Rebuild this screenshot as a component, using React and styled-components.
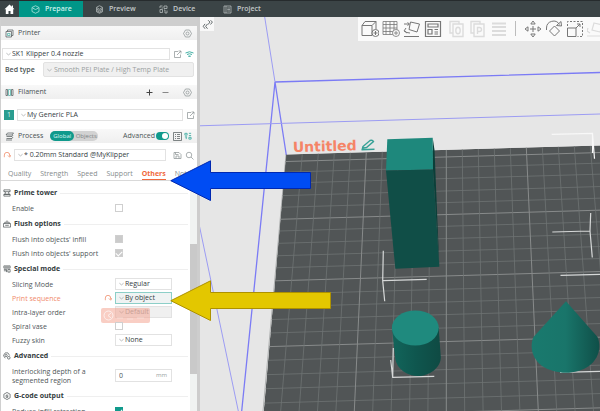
import React from "react";
import styled, { createGlobalStyle } from "styled-components";

const GlobalStyle = createGlobalStyle`
  * {
    box-sizing: border-box;
  }
  body {
    margin: 0;
    overflow: hidden;
    font-family: "Open Sans", "Noto Sans", sans-serif;
    font-size: 7px;
    line-height: 10px;
    color: #4c5456;
    background: #e6e6e6;
  }
  button, input, select {
    font: inherit;
    color: inherit;
    margin: 0;
    padding: 0;
    border: none;
    background: none;
    outline: none;
  }
  svg {
    display: block;
    flex: none;
  }
`;

const Page = styled.div`
  position: relative;
  display: flex;
  flex-direction: column;
  height: 100vh;
  overflow: hidden;
`;

/* top bar */
const TopBar = styled.nav`
  display: flex;
  flex: none;
  height: 17px;
  background: #3b4446;
  border-top: 1px solid #262b2d;
`;
const HomeButton = styled.button`
  display: flex;
  align-items: center;
  justify-content: center;
  width: 19px;
`;
const NavTab = styled.button`
  display: flex;
  align-items: center;
  gap: 5px;
  width: 64px;
  padding-left: 12px;
  font-weight: 600;
  color: ${({ $active }) => ($active ? "#c9f1eb" : "#c3c8c9")};
  background: ${({ $active }) => ($active ? "#009688" : "transparent")};
`;

const Workspace = styled.div`
  display: flex;
  flex: 1;
  min-height: 0;
`;

/* sidebar */
const Sidebar = styled.aside`
  display: flex;
  flex-direction: column;
  flex: 0 0 200px;
  min-height: 0;
  background: #fff;
  border-left: 1px solid #d0d0d0;
  border-right: 3px solid #cdcdcd;
`;
const Strip = styled.div`
  flex: none;
  height: 9px;
  background: #cecece;
`;
const PanelHeader = styled.header`
  display: flex;
  flex: none;
  align-items: center;
  gap: 4px;
  height: 14px;
  padding: 0 5px 0 4px;
  background: linear-gradient(#f8f8f8, #efefef);
`;
const PanelTitle = styled.h2`
  margin: 0;
  font-size: 7px;
  font-weight: 500;
  color: #474f51;
`;
const Spacer = styled.div`
  flex: 1;
`;
const IconButton = styled.button`
  display: flex;
  align-items: center;
  justify-content: center;
  flex: none;
  width: ${({ $wide }) => ($wide ? "14px" : "10px")};
  height: 10px;
  color: ${({ $tone }) => $tone || "#888f91"};
`;
const PanelBody = styled.div`
  display: flex;
  flex: none;
  flex-direction: column;
  gap: 2px;
  padding: ${({ $pad }) => $pad};
`;
const FieldRow = styled.div`
  display: flex;
  align-items: center;
  gap: 2px;
`;
const FieldLabel = styled.label`
  width: 39px;
  padding-left: 3px;
  font-weight: 600;
`;
const Combo = styled.span`
  display: flex;
  flex: 1;
  align-items: center;
  gap: ${({ $tight }) => ($tight ? "1px" : "2px")};
  min-width: 0;
  height: ${({ $tall }) => ($tall ? "15px" : "12px")};
  padding: 0 3px;
  border: 1px solid ${({ $focus }) => ($focus ? "#8ccfc8" : "#e2e2e2")};
  border-radius: ${({ $tall }) => ($tall ? "2px" : "0")};
  background: ${({ $muted, $focus }) =>
    $muted ? "#f0f0f0" : $focus ? "#eff3f3" : "#fff"};
  color: ${({ $muted }) => ($muted ? "#9a9fa0" : "#353d3f")};
  select {
    flex: 1;
    min-width: 0;
    appearance: none;
    line-height: 10px;
    opacity: 1;
  }
`;
const FilamentChip = styled.button`
  width: 10px;
  height: 10px;
  margin: 0 1px 0 1px;
  line-height: 8px;
  color: #d5f2ee;
  background: #2a9d90;
`;
const Scope = styled.div`
  display: flex;
  align-items: center;
  height: 10px;
  margin-left: 3px;
  border-radius: 5px;
  background: #d2d2d2;
`;
const ScopeButton = styled.button`
  height: 10px;
  width: 24px;
  border-radius: 5px;
  font-size: 6px;
  line-height: 9px;
  color: ${({ $active }) => ($active ? "#d8f5f1" : "#7d8385")};
  background: ${({ $active }) => ($active ? "#109a8c" : "transparent")};
`;
const SwitchLabel = styled.label`
  display: flex;
  align-items: center;
  gap: 1px;
`;
const Switch = styled.input`
  appearance: none;
  display: flex;
  justify-content: flex-end;
  width: 13px;
  height: 8px;
  && {
    padding: 1px;
    border-radius: 4px;
    background: #109a8c;
  }
  &::before {
    content: "";
    width: 6px;
    height: 6px;
    border-radius: 3px;
    background: #fff;
  }
`;

const TabList = styled.div`
  display: flex;
  flex: none;
  gap: 9px;
  height: 14px;
  padding-left: 7px;
  overflow: hidden;
  border-bottom: 1px solid #d9d9d9;
`;
const SettingsTab = styled.button`
  flex: none;
  height: 13px;
  white-space: nowrap;
  color: ${({ $active }) => ($active ? "#f0693d" : "#858b8d")};
  font-weight: ${({ $active }) => ($active ? 700 : 400)};
  box-shadow: ${({ $active }) => ($active ? "inset 0 -1px #f0693d" : "none")};
`;

const Settings = styled.div`
  display: flex;
  flex: 1;
  min-height: 0;
`;
const SettingsList = styled.div`
  flex: 1;
  min-width: 0;
  padding: 3px 2px 0 2px;
  overflow: hidden;
`;
const ScrollTrack = styled.div`
  width: 7px;
  padding-top: 63px;
  background: #f0f3f2;
`;
const ScrollThumb = styled.div`
  height: 130px;
  background: #c9c9c9;
`;
const GroupTitle = styled.h3`
  display: flex;
  align-items: center;
  gap: 3px;
  height: 16px;
  margin: 1px 0 0;
  font-size: 7px;
  font-weight: 700;
  color: #343c3e;
  &::after {
    content: "";
    flex: 1;
    height: 1px;
    background: #efefef;
  }
`;
const Option = styled.div`
  position: relative;
  display: grid;
  grid-template-columns: 91px 12px 57px;
  align-items: center;
  min-height: ${({ $double }) => ($double ? "23px" : "14px")};
  padding-left: 9px;
  line-height: 9px;
  label {
    color: ${({ $changed }) => ($changed ? "#f08a6c" : "#4f5759")};
  }
`;
const OptionControl = styled.div`
  display: flex;
  align-items: center;
  grid-column: 3;
`;
const Check = styled.input`
  appearance: none;
  display: flex;
  justify-content: center;
  width: 8px;
  height: 8px;
  && {
    border: 1px solid ${({ $on }) => ($on ? "#109a8c" : "#cfcfcf")};
    background: ${({ $on, disabled }) =>
      $on ? "#109a8c" : disabled ? "#cbcbcb" : "#fff"};
  }
  &:checked::before {
    content: "";
    width: 3px;
    height: 5px;
    border: solid #fff;
    border-width: 0 1px 1px 0;
    transform: rotate(45deg);
  }
`;
const NumberBox = styled.span`
  display: flex;
  flex: 1;
  align-items: center;
  height: 13px;
  padding: 0 4px 0 3px;
  border: 1px solid #e2e2e2;
  input {
    flex: 1;
    width: 0;
  }
`;
const Unit = styled.span`
  font-size: 6px;
  color: #9a9fa1;
`;
const ResetHint = styled.div`
  position: absolute;
  left: 98px;
  top: 3px;
  display: flex;
  align-items: center;
  width: 49px;
  height: 15px;
  padding-left: 2px;
  border-radius: 2px;
  background: rgba(244, 158, 138, 0.5);
`;

/* 3d view */
const Viewport = styled.main`
  position: relative;
  flex: 1;
  min-width: 0;
  background: #e6e6e6;
`;
const Canvas = styled.svg`
  position: absolute;
  inset: 0;
  width: 100%;
  height: 100%;
`;
const ViewTools = styled.div`
  position: relative;
  display: flex;
  justify-content: space-between;
  align-items: flex-start;
`;
const CollapseButton = styled.button`
  display: flex;
  align-items: center;
  justify-content: center;
  width: 14px;
  height: 14px;
  background: #f8f8f8;
`;
const Toolbar = styled.div`
  display: flex;
  flex: 0 0 242px;
  height: 24px;
  padding-left: 1px;
  overflow: hidden;
  background: #fafafa;
`;
const ToolGroup = styled.div`
  display: flex;
  margin-right: 3px;
`;
const Divider = styled.div`
  flex: none;
  width: 1px;
  height: 15px;
  margin: 4px 6px 0 6px;
  background: #bcbcbc;
`;
const Tool = styled.button`
  display: flex;
  align-items: center;
  justify-content: center;
  flex: none;
  width: 21px;
  height: 24px;
  color: ${({ disabled }) => (disabled ? "#dcdcdc" : "#777")};
`;
const Arrow = styled.svg`
  position: absolute;
  left: 170px;
  top: ${({ $top }) => $top};
  pointer-events: none;
`;

const Icon = ({ size = 9, box = 18, w = 1.4, children }) => (
  <svg
    width={size}
    height={size}
    viewBox={`0 0 ${box} ${box}`}
    fill="none"
    stroke="currentColor"
    strokeWidth={w}
    aria-hidden="true"
  >
    {children}
  </svg>
);

const Chevron = () => (
  <svg width="5" height="4" viewBox="0 0 5 4" fill="none" stroke="#a9adae" strokeWidth="0.8">
    <path d="M0.4 1.2 2.5 2.9 4.6 1.2" />
  </svg>
);
const Gear = () => (
  <Icon>
    <path d="M5 2h8l4 7-4 7H5L1 9z" />
    <circle cx="9" cy="9" r="3" />
  </Icon>
);
const Edit = () => (
  <Icon>
    <path d="M10 3H3v12h12V9M8 10l8-8M11 2h5v5" />
  </Icon>
);
const Reset = () => (
  <Icon size={8} w={1.8}>
    <path d="M3 14V9a6 6 0 0 1 12 0v3M11 10l4 4 3-5" />
  </Icon>
);

const Select = ({ id, value, label, ...props }) => (
  <Combo {...props}>
    <Chevron />
    <select id={id} aria-label={label} disabled={props.$muted}>
      <option>{value}</option>
    </select>
  </Combo>
);

const tabs = ["Quality", "Strength", "Speed", "Support", "Others", "Notes"];

const groups = [
  {
    title: "Prime tower",
    icon: <path d="M2 2h14v4H2zM4 6l2 3-3 3h12l-3-3 2-3M2 12h14v4H2z" />,
    options: [{ id: "prime", label: "Enable", type: "check" }],
  },
  {
    title: "Flush options",
    icon: <path d="M1 8h16v8H1zM4 8V5h10v3M9 5V1M5 12h8" />,
    options: [
      { id: "infill", label: "Flush into objects' infill", type: "check", disabled: true },
      { id: "support", label: "Flush into objects' support", type: "check", disabled: true, checked: true },
    ],
  },
  {
    title: "Special mode",
    icon: <path d="M2 2h14v5H2zM2 10h6v6M11 10h5v6h-5zM2 13h6M4 4.5h10" />,
    options: [
      { id: "slicing", label: "Slicing Mode", type: "select", value: "Regular" },
      { id: "sequence", label: "Print sequence", type: "select", value: "By object", changed: true },
      { id: "order", label: "Intra-layer order", type: "select", value: "Default", muted: true, hint: true },
      { id: "spiral", label: "Spiral vase", type: "check" },
      { id: "fuzzy", label: "Fuzzy skin", type: "select", value: "None" },
    ],
  },
  {
    title: "Advanced",
    icon: (
      <>
        <path d="M5 14 1 8l4-6h6l4 6" />
        <circle cx="7" cy="8" r="2.5" />
        <circle cx="13" cy="13" r="3" />
      </>
    ),
    options: [
      { id: "depth", label: "Interlocking depth of a segmented region", type: "number", value: "0" },
    ],
  },
  {
    title: "G-code output",
    icon: (
      <>
        <path d="M9 1l7 4v8l-7 4-7-4V5z" />
        <path d="M12 7H7v5h4V9.5H9" />
      </>
    ),
    options: [
      { id: "retraction", label: "Reduce infill retraction", type: "check", checked: true, on: true },
    ],
  },
];

const OptionRow = ({ option }) => {
  const { id, label, type, value, changed, muted, hint, disabled, checked, on } = option;
  return (
    <Option $changed={changed} $double={type === "number"}>
      <label htmlFor={id}>{label}</label>
      {changed && (
        <IconButton $tone="#f0906f" aria-label="Reset value">
          <Reset />
        </IconButton>
      )}
      <OptionControl>
        {type === "select" && (
          <Select id={id} value={value} $focus={changed} $muted={muted} $tight />
        )}
        {type === "check" && (
          <Check id={id} type="checkbox" disabled={disabled} defaultChecked={checked} $on={on} />
        )}
        {type === "number" && (
          <NumberBox>
            <input id={id} type="text" defaultValue={value} />
            <Unit>mm</Unit>
          </NumberBox>
        )}
      </OptionControl>
      {hint && (
        <ResetHint>
          <svg width="45" height="11" viewBox="0 0 45 11" fill="none" stroke="#fff" opacity="0.7">
            <circle cx="5.5" cy="5.5" r="4.5" />
            <path d="M8 3 5 5.5 8 8" />
            <path d="M14 8h6M24 9h6M34 8h7" opacity="0.5" />
          </svg>
        </ResetHint>
      )}
    </Option>
  );
};

// build plate grid, rows are spaced by perspective
const rows = [
  161.7, 172.3, 183.3, 195.7, 207.3, 219.3, 231, 243.3, 255.7, 267.7, 280.7, 294,
  306.7, 319.3, 332.7, 346.3, 360, 374.3, 388.3, 402.7, 417,
];
const columns = Array.from({ length: 20 }, (_, i) => i - 9);

const Scene = () => (
  <Canvas viewBox="200 17 400 394" preserveAspectRatio="xMinYMin slice" role="img" aria-label="Build plate">
    <defs>
      <clipPath id="plate">
        <path d="M286 154.5 600 145.4 900 137V800H230z" />
      </clipPath>
      <linearGradient id="cone" x1="0" x2="1">
        <stop offset="0" stopColor="#197a6e" />
        <stop offset="0.5" stopColor="#19756a" />
        <stop offset="1" stopColor="#0f4f48" />
      </linearGradient>
      <linearGradient id="tube" x1="0" x2="1">
        <stop offset="0" stopColor="#12655b" />
        <stop offset="0.5" stopColor="#0f564e" />
        <stop offset="1" stopColor="#0f4a43" />
      </linearGradient>
    </defs>
    <g fill="none" stroke="#7b7bf5" strokeWidth="1.3">
      <path d="M275 82 600 72.5M275 82 286.3 155M275 82 241.7 411" />
      <path d="M264.7 17 275 82M199 125.8 600 114M199 224 238.3 411" strokeWidth="1" stroke="#9c9cf3" />
    </g>
    <g clipPath="url(#plate)">
      <path d="M286 154.5 600 145.4 900 137V800H230z" fill="#515556" />
      {rows.map((y, i) => (
        <path
          key={y}
          d={`M262 ${y + 0.5} L700 ${y - 12}`}
          stroke={i % 5 === 0 ? "#888b8b" : "#6f7373"}
          strokeWidth={i % 5 === 0 ? 1 : 0.8}
        />
      ))}
      {columns.map((k) => (
        <path
          key={k}
          d={`M${446.3 + 16 * k} ${149.7 - 0.46 * k} L${446.3 + 18.4 * k} 411`}
          stroke={k % 5 === 0 ? "#888b8b" : "#6f7373"}
          strokeWidth={k % 5 === 0 ? 1 : 0.8}
        />
      ))}
    </g>
    <path d="M286 154.5 263 411" stroke="#8b8e8e" strokeWidth="0.6" />
    <g fill="none" stroke="#d6d8d8" strokeWidth="1.2">
      <path d="M551.7 134.3 592.5 133.3 594.5 158.7M592.5 133.3V153" stroke="#f8f8f8" />
      <path d="M590.7 213 590 231 592.3 257.5M552.3 232 590 231M560.5 275.3 600 274.3" />
      <path d="M383.3 250.7 382.7 280.7 384.7 301.3M382.7 280.7 426.7 279.3" />
      <path d="M393.3 348 392.7 377.3 434.3 376.3M390.7 360 392.7 377.3M560 372.3 600 371.3" />
    </g>
    <path d="M432.7 137.7 434.5 150 439.3 266.7 433 169.3z" fill="#0b3f39" />
    <path d="M387.3 139.3 432.7 137.7 433 169.5 386 170.5z" fill="#1e887c" />
    <path d="M386 170.5 433 169.5 439.3 266.7 395.3 268.7z" fill="#104e47" />
    <path d="M392 328 395.3 359C397 369 407 376 418 376S441 368 440.8 357L438.7 328z" fill="url(#tube)" />
    <ellipse cx="415.3" cy="328" rx="23.4" ry="17.6" fill="#1f8a7e" />
    <path d="M566 301.3 533.5 337C529 348 533 359 542 366 556 375 576 375 589 366 598 359 602 348 597.5 337z" fill="url(#cone)" />
    <text
      x="293"
      y="152"
      transform="rotate(-1.5 293 152)"
      fontFamily="DejaVu Sans"
      fontSize="14"
      fontWeight="700"
      fill="#f58466"
    >
      Untitled
    </text>
    <g fill="none" stroke="#36a196" strokeWidth="1.4">
      <path d="M363 146.5 370 140.5Q372.5 139.5 373.5 141.5L366.5 147.5 362.5 148.3z" />
      <path d="M361.5 149.7 374.5 149.2" />
    </g>
  </Canvas>
);

const App = () => {
  return (
    <Page>
      <GlobalStyle />
      <TopBar>
        <HomeButton aria-label="Home">
          <svg width="11" height="11" viewBox="0 0 11 11" fill="#fff">
            <path d="M5.5 0.5 0.5 5.3H1.8V10H4.5V7H6.5V10H9.2V5.3H10.5L9 3.8V1.5H7.8V2.7z" />
          </svg>
        </HomeButton>
        <NavTab $active>
          <Icon>
            <path d="M9 1.5 16 5v8l-7 3.5L2 13V5zM3 6l6 3 6-3" />
          </Icon>
          Prepare
        </NavTab>
        <NavTab>
          <Icon>
            <path d="M9 1.5 15 4.5v9l-6 3-6-3v-9zM4 5.5l5 3 5-3M4 8.5l5 3 5-3M4 11.5l5 3 5-3" />
          </Icon>
          Preview
        </NavTab>
        <NavTab>
          <Icon>
            <path d="M2 6V2h5M10 2h6v5h-6zM2 9h5v6H2zM10 10h2v6h4v-5M5 6h3" />
          </Icon>
          Device
        </NavTab>
        <NavTab>
          <Icon>
            <path d="M2 2h14v14H2zM6 2v14M8.5 6H14M8.5 9H14M8.5 12H14" />
          </Icon>
          Project
        </NavTab>
      </TopBar>

      <Workspace>
        <Sidebar>
          <Strip />
          <PanelHeader>
            <Icon>
              <path d="M2 5h11v11H2zM5 5V2h11v11h-3" />
              <path d="M5 9h5v4H5z" stroke="#45b0a5" />
            </Icon>
            <PanelTitle>Printer</PanelTitle>
            <Spacer />
            <IconButton aria-label="Printer settings">
              <Gear />
            </IconButton>
          </PanelHeader>
          <PanelBody $pad="8px 3px 8px 1px">
            <FieldRow>
              <Select label="Printer preset" value="SK1 Klipper 0.4 nozzle" $tight />
              <IconButton aria-label="Edit printer">
                <Edit />
              </IconButton>
              <IconButton aria-label="Connection" $tone="#45b0a5">
                <Icon w={2}>
                  <path d="M1 6q8-5 16 0M4 9q5-3 10 0M7 12h4l-2 2z" />
                </Icon>
              </IconButton>
            </FieldRow>
            <FieldRow>
              <FieldLabel htmlFor="bed">Bed type</FieldLabel>
              <Select id="bed" value="Smooth PEI Plate / High Temp Plate" $muted $tall />
            </FieldRow>
          </PanelBody>

          <PanelHeader>
            <Icon>
              <path d="M2 3h3v12H2zM13 3h3v12h-3z" />
              <path d="M7 3h4v12H7z" stroke="#45b0a5" />
            </Icon>
            <PanelTitle>Filament</PanelTitle>
            <Spacer />
            <IconButton aria-label="Add filament" $wide $tone="#444">
              <Icon w={2}>
                <path d="M9 3v12M3 9h12" />
              </Icon>
            </IconButton>
            <IconButton aria-label="Remove filament" $tone="#888">
              <Icon w={2}>
                <path d="M3 9h12" />
              </Icon>
            </IconButton>
            <Spacer style={{ maxWidth: 4 }} />
            <IconButton aria-label="Filament settings">
              <Gear />
            </IconButton>
          </PanelHeader>
          <PanelBody $pad="10px 2px 8px 2px">
            <FieldRow>
              <FilamentChip>1</FilamentChip>
              <Select label="Filament preset" value="My Generic PLA" $tight />
              <IconButton aria-label="Edit filament">
                <Edit />
              </IconButton>
            </FieldRow>
          </PanelBody>

          <PanelHeader>
            <Icon>
              <path d="M5 2h12l-3 4H2zM3 9h11l2-3M3 13h11l2-3M2 16h12" />
            </Icon>
            <PanelTitle>Process</PanelTitle>
            <Scope>
              <ScopeButton $active>Global</ScopeButton>
              <ScopeButton>Objects</ScopeButton>
            </Scope>
            <Spacer />
            <SwitchLabel>
              Advanced
              <Switch type="checkbox" role="switch" defaultChecked />
            </SwitchLabel>
            <FieldRow>
              <Icon>
                <path d="M1 1h16v16H1zM4 5h2M8 5h6M4 9h2M8 9h6M4 13h2M8 13h6" />
              </Icon>
              <Icon size={8} w={2}>
                <path d="M2 3h5v4H2zM11 3h5M11 8h5M2 11h5M5 11v5M11 12h5v4h-5z" stroke="#45b0a5" />
              </Icon>
            </FieldRow>
          </PanelHeader>
          <PanelBody $pad="6px 3px 6px 1px">
            <FieldRow>
              <IconButton aria-label="Reset preset" $tone="#f0906f">
                <Reset />
              </IconButton>
              <Select label="Process preset" value="* 0.20mm Standard @MyKlipper" $tight />
              <Spacer style={{ maxWidth: 2 }} />
              <IconButton aria-label="Save preset">
                <Icon>
                  <path d="M2 3h10l4 4v8H2zM5 3v4h6M6 15v-5h6v5" />
                </Icon>
              </IconButton>
              <IconButton aria-label="Search">
                <Icon>
                  <circle cx="8" cy="8" r="5.5" />
                  <path d="m12 12 5 5" />
                </Icon>
              </IconButton>
            </FieldRow>
          </PanelBody>

          <TabList role="tablist">
            {tabs.map((tab) => (
              <SettingsTab key={tab} role="tab" aria-selected={tab === "Others"} $active={tab === "Others"}>
                {tab}
              </SettingsTab>
            ))}
          </TabList>
          <Settings>
            <SettingsList>
              {groups.map((group) => (
                <section key={group.title}>
                  <GroupTitle>
                    <Icon size={8}>{group.icon}</Icon>
                    {group.title}
                  </GroupTitle>
                  {group.options.map((option) => (
                    <OptionRow key={option.id} option={option} />
                  ))}
                </section>
              ))}
            </SettingsList>
            <ScrollTrack>
              <ScrollThumb />
            </ScrollTrack>
          </Settings>
        </Sidebar>

        <Viewport>
          <Scene />
          <ViewTools>
            <CollapseButton aria-label="Collapse sidebar">
              <Icon size={11}>
                <path d="m5 8-3 4 3 4M9 8l-3 4 3 4M10 2l3 3-3 4M14 2l3 3-3 4" />
              </Icon>
            </CollapseButton>
            <Toolbar>
              <ToolGroup>
                <Tool aria-label="Add object">
                  <Icon size={18} w={1}>
                    <path d="M1 5.5h10v10H1zM1 5.5 4 1.5h11l-4 4M15 1.5v8" />
                    <circle cx="14.5" cy="13" r="3.5" fill="#fafafa" />
                    <path d="M14.5 11v4M12.5 13h4" />
                  </Icon>
                </Tool>
                <Tool aria-label="Add plate">
                  <Icon size={18} w={0.8}>
                    <path d="M1 1.5h14v13H1zM1 4.5h14M1 8h14M1 11.5h14M4 1.5v13M8 1.5v13M12 1.5v13" />
                    <circle cx="14" cy="13" r="3.5" fill="#fafafa" />
                    <path d="M14 11v4M12 13h4" />
                  </Icon>
                </Tool>
                <Tool aria-label="Auto orient">
                  <Icon size={18} w={1}>
                    <path d="m7.5 2 9 2-2.5 8-8-2.5zM1 4h5M4.5 2.5 6.5 4l-2 1.5M3 8l-2 3 3 2M2 11q1 2 5 2M1 16.5h15" />
                  </Icon>
                </Tool>
                <Tool aria-label="Arrange">
                  <Icon size={18} w={1.2}>
                    <path d="M1.500 1.500h15v15h-15zM4 4h10v3H4zM4 9.500h4V14H4zM10.500 9.500H14M10.500 12H14M10.500 14H14" />
                  </Icon>
                </Tool>
              </ToolGroup>
              <Tool disabled aria-label="Split to objects">
                <Icon size={18}>
                  <path d="M5 13H2V1.5h9V4M5 4h10v12.5H5z" />
                  <ellipse cx="10" cy="10.5" rx="2.2" ry="3.2" />
                </Icon>
              </Tool>
              <Tool disabled aria-label="Split to parts">
                <Icon size={18}>
                  <path d="M5 13H2V1.5h9V4M5 4h10v12.5H5zM8.5 14V7.5h2a2 2 0 0 1 0 4h-2" />
                </Icon>
              </Tool>
              <Tool disabled aria-label="Variable layer height">
                <Icon size={18} w={2}>
                  <path d="M2 3.5h14M2 7h14M2 11h14M2 15h14" />
                </Icon>
              </Tool>
              <Divider />
              <Tool aria-label="Move">
                <Icon size={18} w={1}>
                  <path d="m9 1 2.2 3H6.8zM9 17l2.2-3H6.8zM1 9l3-2.2v4.4zM17 9l-3-2.2v4.4zM9 6v6M6 9h6" />
                </Icon>
              </Tool>
              <Tool aria-label="Rotate">
                <Icon size={18} w={1}>
                  <path d="m9.5 6 5 5-5 5-5-5zM1.5 10V8a7 7 0 0 1 13-3.5M11.5 5.5l5 .5-.5-4.5z" />
                </Icon>
              </Tool>
              <Tool aria-label="Scale">
                <Icon size={18} w={1}>
                  <path d="M1.5 8h8.5v8.5H1.5z" />
                  <path d="M1.5 6V1.5h15v15H11.5" strokeDasharray="2 1.5" />
                  <path d="m10 8 4-4M11 4h3v3" />
                </Icon>
              </Tool>
              <Tool disabled aria-label="Lay on face">
                <Icon size={18} w={1.2}>
                  <path d="m7 3 9 2-3 7-8-2zM1 8l-1 3 3 2M0 16h16" />
                </Icon>
              </Tool>
            </Toolbar>
          </ViewTools>
        </Viewport>
      </Workspace>

      <Arrow $top="160px" width="142" height="42" viewBox="0 0 142 42" fill="#004cf3" stroke="#0028b0">
        <path d="M0.8 20.7 40.5 0.8V12.5H140.5V28.5H40.5V40.5z" />
      </Arrow>
      <Arrow $top="280px" width="162" height="42" viewBox="0 0 162 42" fill="#e3c700" stroke="#ad9100">
        <path d="M0.8 20.7 40.5 0.8V12.5H160.5V28.5H40.5V40.5z" />
      </Arrow>
    </Page>
  );
};

export default App;
